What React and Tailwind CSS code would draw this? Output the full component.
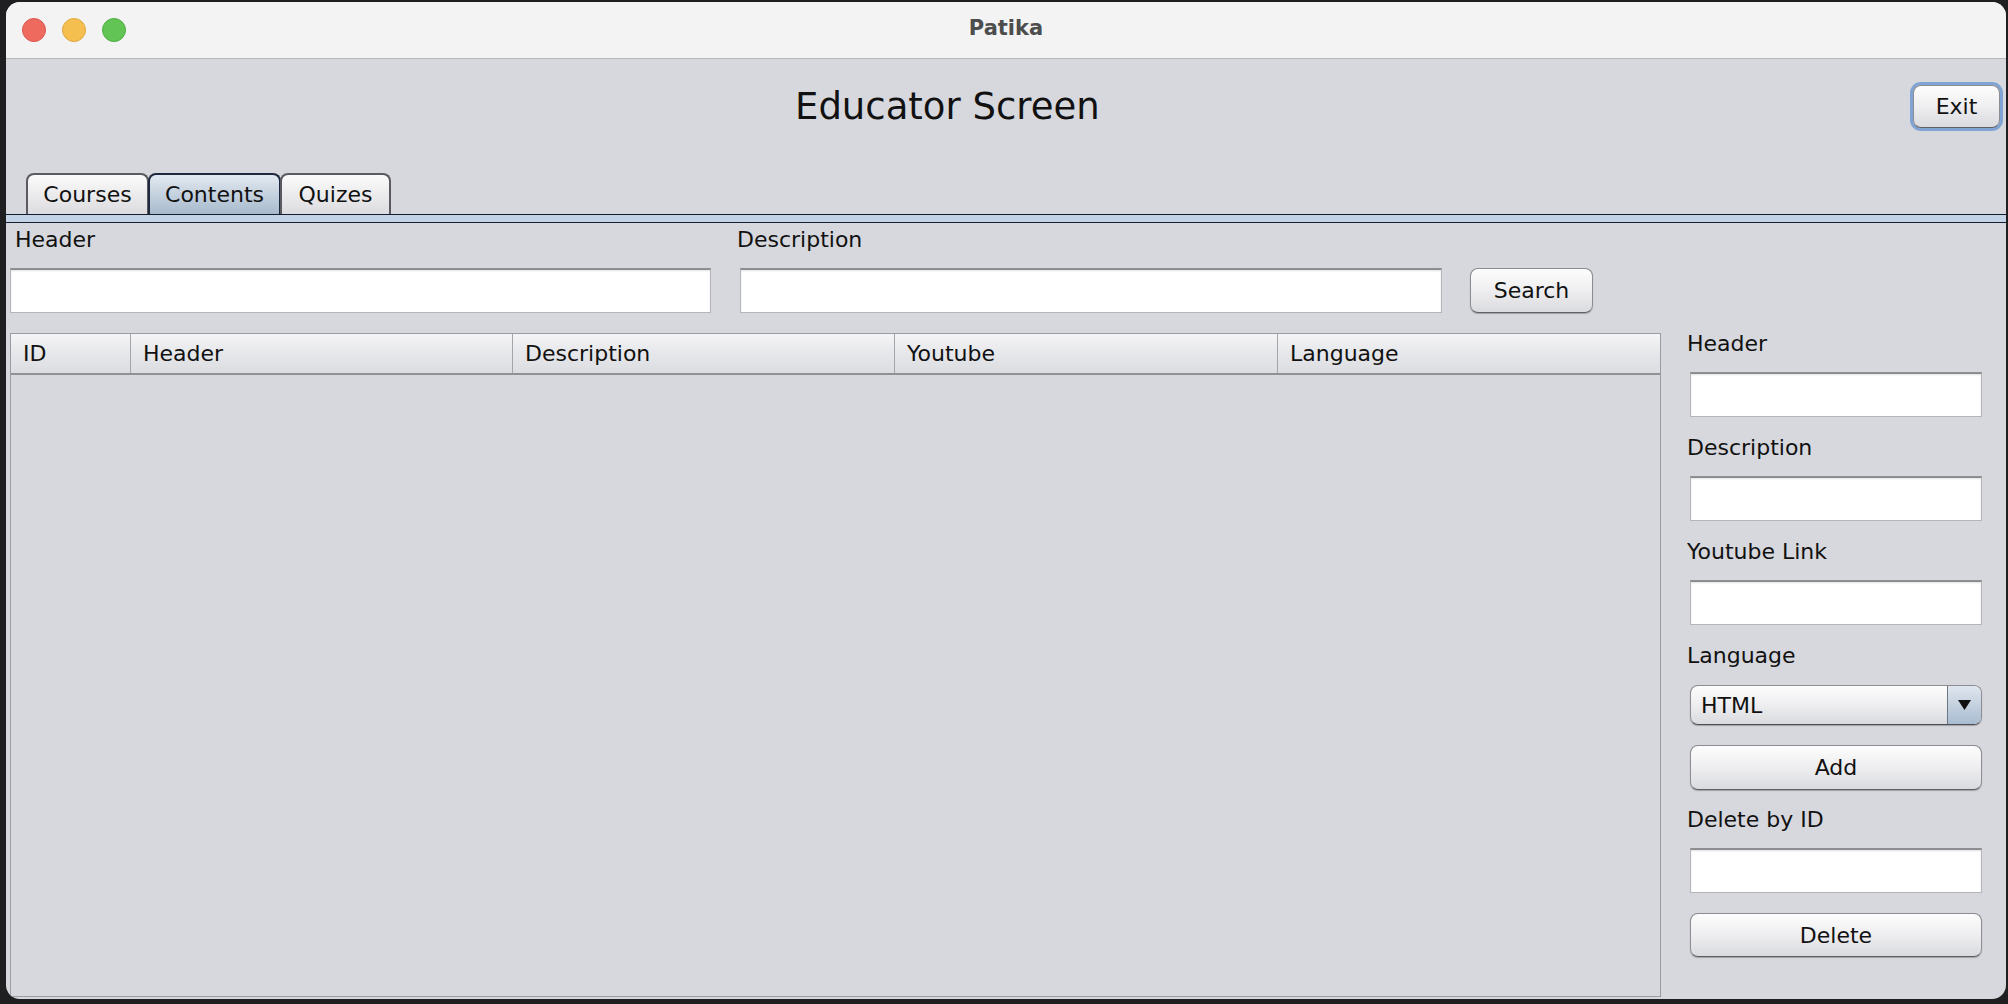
import React from "react";

const font = { fontFamily: '"DejaVu Sans", "Liberation Sans", sans-serif' };

function Field({ className = "" }) {
  return (
    <div
      className={
        "h-[45px] bg-white border border-[#b6b6ba] border-t-[#8e8e92] border-t-2 shadow-[inset_0_1px_2px_rgba(0,0,0,0.12)] " +
        className
      }
    />
  );
}

function Btn({ children, className = "" }) {
  return (
    <div
      className={
        "flex items-center justify-center rounded-[8px] border border-[#8c8c92] border-b-[#5e5e64] bg-gradient-to-b from-[#fdfdfd] via-[#eeeef0] to-[#dadbdf] shadow-[0_1px_1px_rgba(0,0,0,0.25)] text-[22px] text-[#111] " +
        className
      }
    >
      {children}
    </div>
  );
}

function Label({ children, className = "" }) {
  return <div className={"h-[26px] leading-[26px] text-[22px] text-[#111] " + className}>{children}</div>;
}

export default function App() {
  const cols = [
    { name: "ID", w: "w-[120px] border-r" },
    { name: "Header", w: "w-[382px] border-r" },
    { name: "Description", w: "w-[382px] border-r" },
    { name: "Youtube", w: "w-[383px] border-r" },
    { name: "Language", w: "flex-1" },
  ];
  return (
    <div style={font} className="w-[2008px] h-[1004px] bg-[#1f1f21] pt-[2px] pl-[6px] overflow-hidden">
      <div className="w-[2000px] h-[997px] rounded-[14px] overflow-hidden bg-[#d7d8dd] flex flex-col">
        {/* Title bar */}
        <div className="h-[57px] shrink-0 bg-[#f3f3f3] border-b border-[#b9b9b9] grid grid-cols-[1fr_auto_1fr] items-center">
          <div className="flex items-center gap-[16px] pl-[16px]">
            <div className="w-[24px] h-[24px] rounded-full bg-[#ee6a5f] border border-[#d9574d]" />
            <div className="w-[24px] h-[24px] rounded-full bg-[#f5bf4f] border border-[#dea83e]" />
            <div className="w-[24px] h-[24px] rounded-full bg-[#61c454] border border-[#4fae43]" />
          </div>
          <div className="text-[21px] font-bold text-[#4d4d4d] -mt-[2px]">Patika</div>
          <div />
        </div>

        {/* Top area */}
        <div className="h-[114px] shrink-0 flex items-start pt-[26px]">
          <div className="ml-[789px] h-[43px] leading-[43px] text-[37px] text-[#111]">Educator Screen</div>
          <Btn className="ml-auto mr-[6px] w-[87px] h-[43px] ring-[3px] ring-[#7fa4d4]">Exit</Btn>
        </div>

        {/* Tabs */}
        <div className="h-[41px] shrink-0 flex items-end pl-[20px]">
          <div className="w-[123px] h-[41px] flex items-center justify-center rounded-t-[8px] border-2 border-b-0 border-[#5a5a60] bg-gradient-to-b from-[#fbfbfb] to-[#dcdce0] text-[22px] text-[#111]">
            Courses
          </div>
          <div className="w-[133px] -ml-[1px] h-[41px] flex items-center justify-center rounded-t-[8px] border-2 border-b-0 border-[#1e2940] bg-gradient-to-b from-[#e3e9f0] to-[#a7bacd] text-[22px] text-[#111]">
            Contents
          </div>
          <div className="w-[111px] -ml-[1px] h-[41px] flex items-center justify-center rounded-t-[8px] border-2 border-b-0 border-[#5a5a60] bg-gradient-to-b from-[#fbfbfb] to-[#dcdce0] text-[22px] text-[#111]">
            Quizes
          </div>
        </div>
        <div className="h-[9px] shrink-0 border-y border-[#151d30] bg-[#c3d3e6]" />

        {/* Content */}
        <div className="flex-1 min-h-0 flex flex-col px-[4px] pb-[2px]">
          <div className="flex items-end">
            <div className="w-[701px] flex flex-col">
              <Label className="mt-[4px] pl-[5px]">Header</Label>
              <Field className="mt-[15px]" />
            </div>
            <div className="ml-[29px] w-[702px] flex flex-col">
              <Label className="mt-[4px] -ml-[3px]">Description</Label>
              <Field className="mt-[15px]" />
            </div>
            <Btn className="ml-[28px] w-[123px] h-[45px]">Search</Btn>
          </div>

          <div className="mt-[18px] flex-1 min-h-0 flex">
            {/* Table */}
            <div className="mt-[2px] w-[1651px] border border-[#9a9ca3] flex flex-col">
              <div className="h-[41px] shrink-0 flex border-b-2 border-[#8f9197] bg-gradient-to-b from-[#f4f4f6] via-[#e6e7ea] to-[#dcdde0]">
                {cols.map((c) => (
                  <div
                    key={c.name}
                    className={"h-full flex items-center pl-[12px] text-[22px] text-[#111] border-[#a4a5aa] " + c.w}
                  >
                    {c.name}
                  </div>
                ))}
              </div>
              <div className="flex-1" />
            </div>

            {/* Right panel */}
            <div className="ml-[26px] w-[295px] flex flex-col">
              <Label>Header</Label>
              <Field className="mt-[15px] ml-[3px] w-[292px]" />
              <Label className="mt-[18px]">Description</Label>
              <Field className="mt-[15px] ml-[3px] w-[292px]" />
              <Label className="mt-[18px]">Youtube Link</Label>
              <Field className="mt-[15px] ml-[3px] w-[292px]" />
              <Label className="mt-[18px]">Language</Label>
              <div className="mt-[16px] ml-[3px] w-[292px] h-[40px] flex rounded-[8px] border border-[#8c8c92] border-b-[#4e4e54] bg-gradient-to-b from-[#fdfdfd] via-[#eeeef0] to-[#dadbdf] shadow-[0_1px_1px_rgba(0,0,0,0.25)] overflow-hidden">
                <div className="flex-1 flex items-center pl-[10px] text-[22px] text-[#111]">HTML</div>
                <div className="w-[34px] flex items-center justify-center border-l border-[#6d7684] bg-gradient-to-b from-[#dfe6ee] to-[#a9bcd0]">
                  <svg width="13" height="10" viewBox="0 0 13 10">
                    <polygon points="0,0 13,0 6.5,10" fill="#111" />
                  </svg>
                </div>
              </div>
              <Btn className="mt-[20px] ml-[3px] w-[292px] h-[45px]">Add</Btn>
              <Label className="mt-[17px]">Delete by ID</Label>
              <Field className="mt-[15px] ml-[3px] w-[292px]" />
              <Btn className="mt-[20px] ml-[3px] w-[292px] h-[44px]">Delete</Btn>
            </div>
          </div>
        </div>
      </div>
    </div>
  );
}
